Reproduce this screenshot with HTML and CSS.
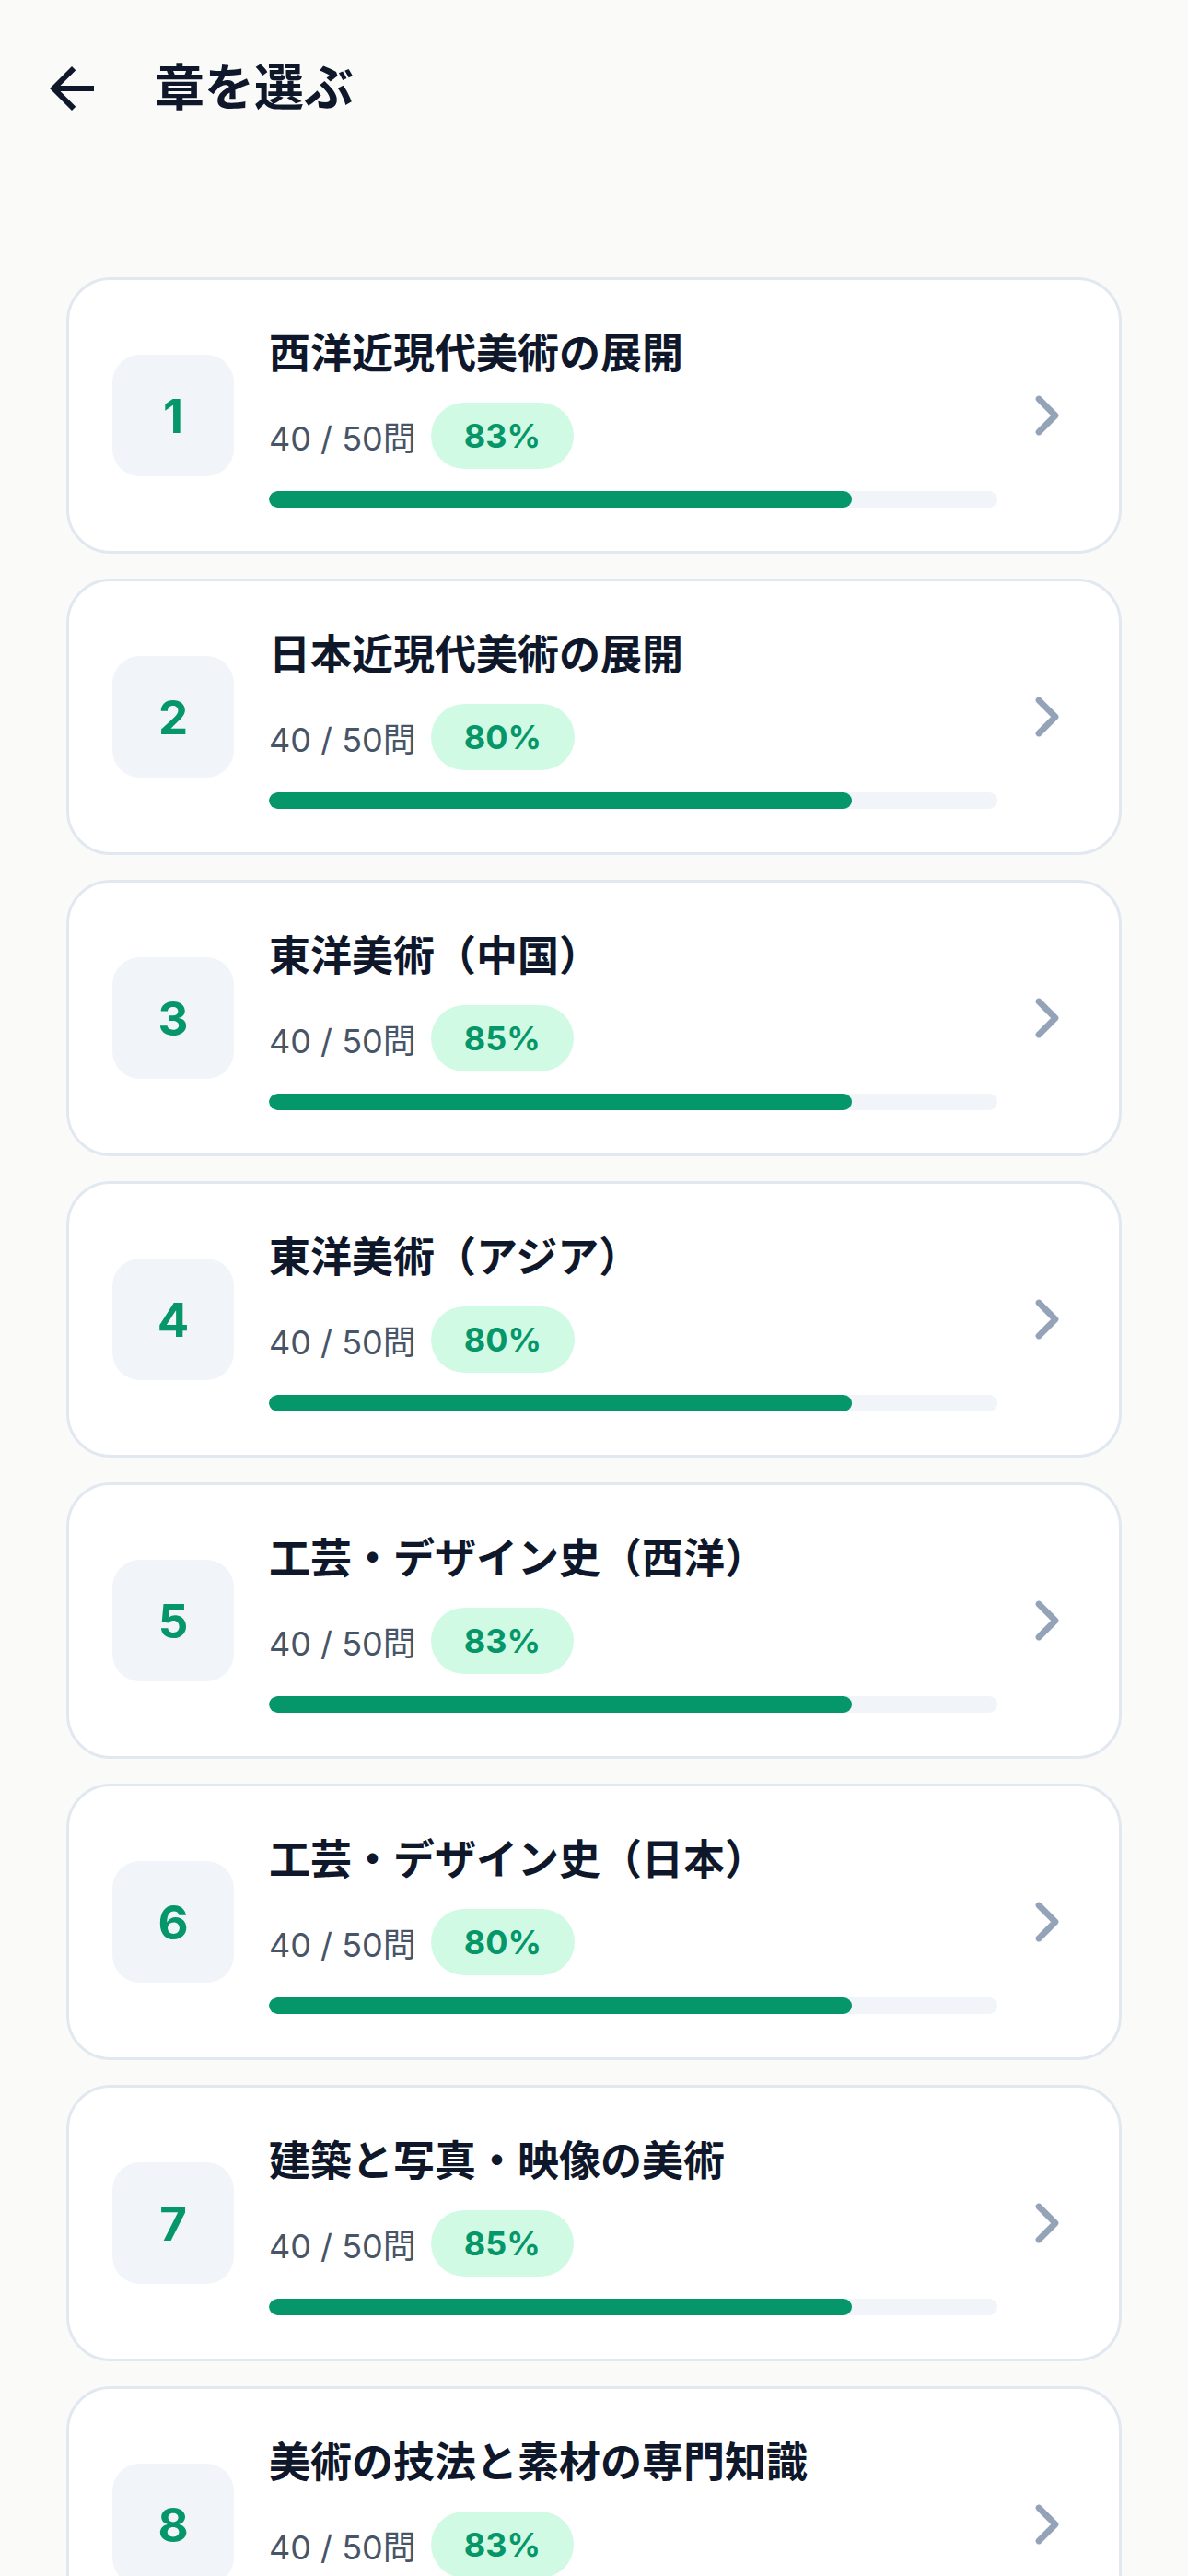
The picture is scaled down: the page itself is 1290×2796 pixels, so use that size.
FILE: index.html
```html
<!DOCTYPE html>
<html lang="ja">
<head>
  <meta charset="UTF-8">
  <title>章を選ぶ</title>
  <link rel="stylesheet" href="styles.css">
</head>
<body>

  <header class="topbar">
    <button class="back-btn" aria-label="戻る">
      <svg viewBox="0 0 24 24" width="72" height="72"><path d="M20 11H7.83l5.59-5.59L12 4l-8 8 8 8 1.41-1.41L7.83 13H20v-2z" fill="#0f172a"/></svg>
    </button>
    <h1>章を選ぶ</h1>
  </header>

  <main class="chapter-list">

    <div class="chapter">
      <div class="chapter-num">1</div>
      <div class="chapter-info">
        <div class="chapter-title">西洋近現代美術の展開</div>
        <div class="chapter-meta">
          <span class="count">40 / 50問</span>
          <span class="rate">83%</span>
        </div>
        <div class="bar"><div class="bar-fill" style="width: 80%"></div></div>
      </div>
      <svg class="chevron" viewBox="0 0 24 24" width="72" height="72"><path d="m9 18 6-6-6-6"/></svg>
    </div>

    <div class="chapter">
      <div class="chapter-num">2</div>
      <div class="chapter-info">
        <div class="chapter-title">日本近現代美術の展開</div>
        <div class="chapter-meta">
          <span class="count">40 / 50問</span>
          <span class="rate">80%</span>
        </div>
        <div class="bar"><div class="bar-fill" style="width: 80%"></div></div>
      </div>
      <svg class="chevron" viewBox="0 0 24 24" width="72" height="72"><path d="m9 18 6-6-6-6"/></svg>
    </div>

    <div class="chapter">
      <div class="chapter-num">3</div>
      <div class="chapter-info">
        <div class="chapter-title">東洋美術（中国）</div>
        <div class="chapter-meta">
          <span class="count">40 / 50問</span>
          <span class="rate">85%</span>
        </div>
        <div class="bar"><div class="bar-fill" style="width: 80%"></div></div>
      </div>
      <svg class="chevron" viewBox="0 0 24 24" width="72" height="72"><path d="m9 18 6-6-6-6"/></svg>
    </div>

    <div class="chapter">
      <div class="chapter-num">4</div>
      <div class="chapter-info">
        <div class="chapter-title">東洋美術（アジア）</div>
        <div class="chapter-meta">
          <span class="count">40 / 50問</span>
          <span class="rate">80%</span>
        </div>
        <div class="bar"><div class="bar-fill" style="width: 80%"></div></div>
      </div>
      <svg class="chevron" viewBox="0 0 24 24" width="72" height="72"><path d="m9 18 6-6-6-6"/></svg>
    </div>

    <div class="chapter">
      <div class="chapter-num">5</div>
      <div class="chapter-info">
        <div class="chapter-title">工芸・デザイン史（西洋）</div>
        <div class="chapter-meta">
          <span class="count">40 / 50問</span>
          <span class="rate">83%</span>
        </div>
        <div class="bar"><div class="bar-fill" style="width: 80%"></div></div>
      </div>
      <svg class="chevron" viewBox="0 0 24 24" width="72" height="72"><path d="m9 18 6-6-6-6"/></svg>
    </div>

    <div class="chapter">
      <div class="chapter-num">6</div>
      <div class="chapter-info">
        <div class="chapter-title">工芸・デザイン史（日本）</div>
        <div class="chapter-meta">
          <span class="count">40 / 50問</span>
          <span class="rate">80%</span>
        </div>
        <div class="bar"><div class="bar-fill" style="width: 80%"></div></div>
      </div>
      <svg class="chevron" viewBox="0 0 24 24" width="72" height="72"><path d="m9 18 6-6-6-6"/></svg>
    </div>

    <div class="chapter">
      <div class="chapter-num">7</div>
      <div class="chapter-info">
        <div class="chapter-title">建築と写真・映像の美術</div>
        <div class="chapter-meta">
          <span class="count">40 / 50問</span>
          <span class="rate">85%</span>
        </div>
        <div class="bar"><div class="bar-fill" style="width: 80%"></div></div>
      </div>
      <svg class="chevron" viewBox="0 0 24 24" width="72" height="72"><path d="m9 18 6-6-6-6"/></svg>
    </div>

    <div class="chapter">
      <div class="chapter-num">8</div>
      <div class="chapter-info">
        <div class="chapter-title">美術の技法と素材の専門知識</div>
        <div class="chapter-meta">
          <span class="count">40 / 50問</span>
          <span class="rate">83%</span>
        </div>
        <div class="bar"><div class="bar-fill" style="width: 80%"></div></div>
      </div>
      <svg class="chevron" viewBox="0 0 24 24" width="72" height="72"><path d="m9 18 6-6-6-6"/></svg>
    </div>

  </main>

</body>
</html>
```

FILE: styles.css
```css
body {
  margin: 0;
  background: #fafaf9;
  font-family: Inter, "Noto Sans CJK JP", sans-serif;
  color: #0f172a;
}

.topbar {
  display: flex;
  align-items: center;
  padding: 60px 42px 0;
  height: 72px;
}

.back-btn {
  width: 72px;
  height: 72px;
  padding: 0;
  border: none;
  background: none;
  display: flex;
}

.topbar h1 {
  margin: 0 0 0 54px;
  font-size: 54px;
  font-weight: 700;
  line-height: 72px;
}

.chapter-list {
  display: flex;
  flex-direction: column;
  gap: 27px;
  padding: 169px 72px 0;
}

.chapter {
  display: flex;
  align-items: center;
  background: #fff;
  border: 3px solid #e2e8f0;
  border-radius: 48px;
  padding: 47px 42px 47px 47px;
}

.chapter-num {
  flex: none;
  width: 132px;
  height: 132px;
  border-radius: 30px;
  background: #f1f5f9;
  color: #059669;
  font-size: 51px;
  font-weight: 700;
  display: flex;
  align-items: center;
  justify-content: center;
  margin-right: 38px;
}

.chapter-info {
  flex: 1;
  min-width: 0;
}

.chapter-title {
  font-size: 45px;
  font-weight: 700;
  line-height: 66px;
  margin-bottom: 20px;
}

.chapter-meta {
  display: flex;
  align-items: center;
  gap: 16px;
}

.count {
  font-size: 36px;
  color: #475569;
}

.rate {
  background: #d1fae5;
  color: #059669;
  font-size: 36px;
  font-weight: 700;
  line-height: 44px;
  padding: 14px 36px;
  border-radius: 999px;
}

.bar {
  margin-top: 24px;
  height: 18px;
  border-radius: 9px;
  background: #f1f5f9;
  overflow: hidden;
}

.bar-fill {
  height: 100%;
  border-radius: 9px;
  background: #059669;
}

.chevron {
  flex: none;
  margin-left: 18px;
  fill: none;
  stroke: #94a3b8;
  stroke-width: 2.25;
  stroke-linecap: round;
  stroke-linejoin: round;
}
```
